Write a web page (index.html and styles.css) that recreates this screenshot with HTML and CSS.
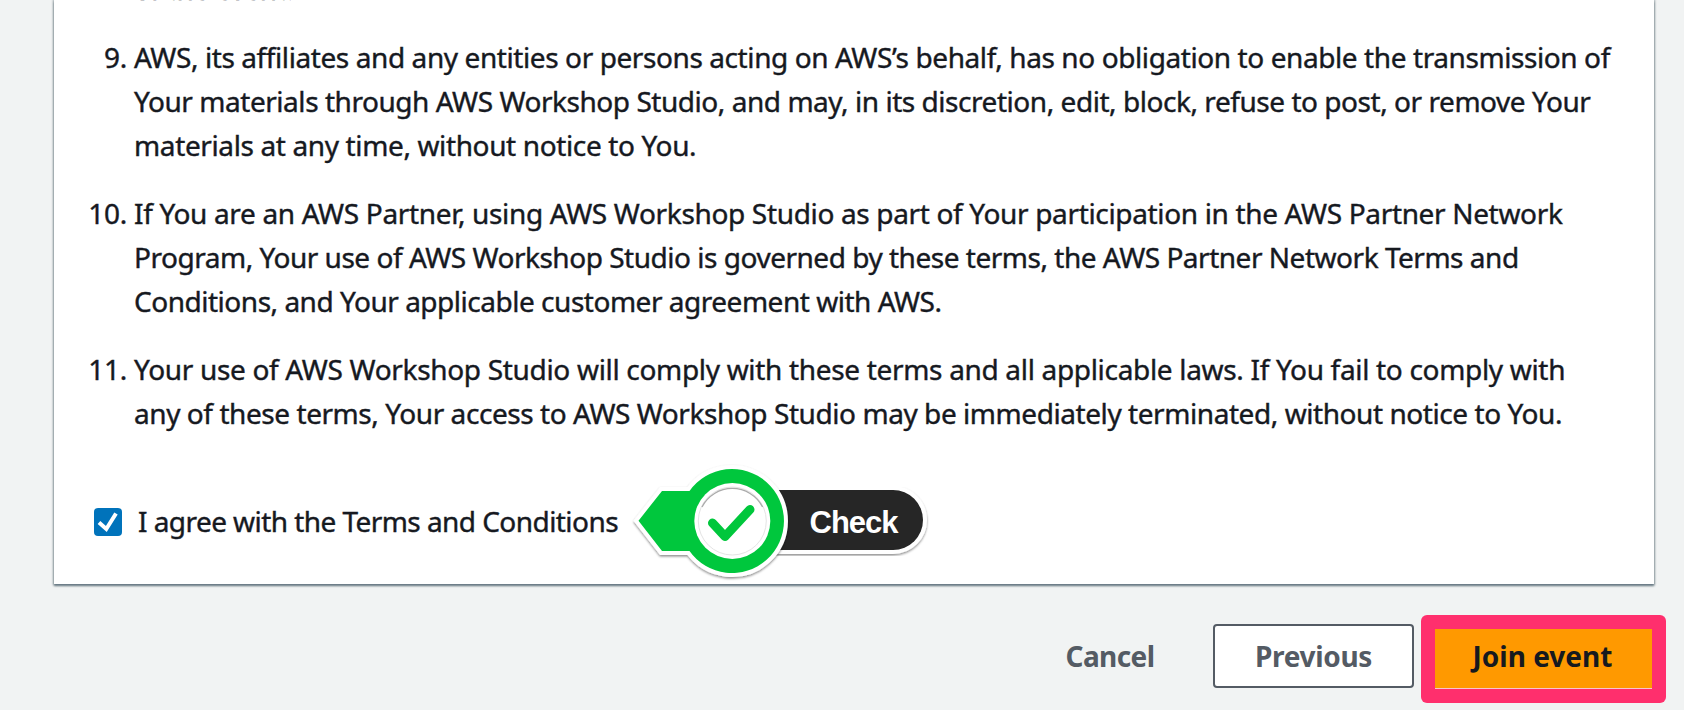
FILE: index.html
```html
<!DOCTYPE html>
<html lang="en">
<head>
<meta charset="utf-8">
<title>Join event</title>
<link rel="stylesheet" href="styles.css">
</head>
<body>
<main class="page">
  <section class="card">
    <ol class="terms" start="8">
      <li class="term"><span class="num"></span><div class="lines">
        <span class="line">of the event.</span>
      </div></li>
      <li class="term"><span class="num">9.</span><div class="lines">
        <span class="line t40">AWS, its affiliates and any entities or persons acting on AWS’s behalf, has no obligation to enable the transmission of</span>
        <span class="line t39">Your materials through AWS Workshop Studio, and may, in its discretion, edit, block, refuse to post, or remove Your</span>
        <span class="line t35">materials at any time, without notice to You.</span>
      </div></li>
      <li class="term"><span class="num">10.</span><div class="lines">
        <span class="line t34">If You are an AWS Partner, using AWS Workshop Studio as part of Your participation in the AWS Partner Network</span>
        <span class="line t48">Program, Your use of AWS Workshop Studio is governed by these terms, the AWS Partner Network Terms and</span>
        <span class="line t45">Conditions, and Your applicable customer agreement with AWS.</span>
      </div></li>
      <li class="term"><span class="num">11.</span><div class="lines">
        <span class="line t32">Your use of AWS Workshop Studio will comply with these terms and all applicable laws. If You fail to comply with</span>
        <span class="line t43">any of these terms, Your access to AWS Workshop Studio may be immediately terminated, without notice to You.</span>
      </div></li>
    </ol>
    <div class="agree">
      <svg class="checkbox" width="28" height="28" viewBox="0 0 28 28">
        <rect width="28" height="28" rx="4" fill="#0073bb"/>
        <path d="M5 14.5l7.3 6.5L22 5.5" fill="none" stroke="#fff" stroke-width="4"/>
      </svg>
      <span class="line agree-text">I agree with the Terms and Conditions</span>
      <svg class="callout" width="320" height="134" viewBox="0 0 320 134">
        <defs>
          <filter id="shadow" x="-5%" y="-5%" width="110%" height="115%">
            <feDropShadow dx="0" dy="1.5" stdDeviation="1" flood-color="#000" flood-opacity=".45"/>
          </filter>
        </defs>
        <g filter="url(#shadow)">
          <path d="M112 40H273a30 30 0 0 1 0 60H112z" fill="#252525" stroke="#fff" stroke-width="8" paint-order="stroke"/>
        </g>
        <g filter="url(#shadow)">
          <path d="M18.5 70.7L42 41H69.500A52 52 0 1 1 69.500 101H42z" fill="#00c73c" stroke="#fff" stroke-width="8" paint-order="stroke"/>
        </g>
        <circle cx="112.300" cy="71" r="38" fill="#fff"/>
        <circle cx="112.300" cy="71" r="34" fill="#fff" stroke="#e4e4e4"/>
        <path d="M82 57A34 34 0 0 1 142.600 57" fill="none" stroke="#aaa" stroke-width="1.300"/>
        <path d="M92.500 73L105 86.500L130 59.500" fill="none" stroke="#00c73c" stroke-width="9" stroke-linecap="round" stroke-linejoin="round"/>
        <text class="callout-label" x="189.500" y="83">Check</text>
      </svg>
    </div>
  </section>
  <footer class="actions">
    <button class="btn cancel">Cancel</button>
    <button class="btn previous">Previous</button>
    <div class="highlight"><button class="btn join">Join event</button></div>
  </footer>
</main>
</body>
</html>
```
FILE: styles.css
```css
* { box-sizing: border-box; }
body { margin: 0; background: #f1f3f3; color: #16191f; font: 28px/44px "Noto Sans", "Open Sans", sans-serif; }
.page { width: 1684px; height: 710px; overflow: hidden; display: flex; flex-direction: column; }
.card { flex: none; height: 584px; margin: 0 30px 0 54px; background: #fff; box-shadow: 0 2px 2px #687a84, 0 0 2px 1px rgba(0, 28, 36, .3); }
.terms { list-style: none; margin: -33px 0 0; padding: 0; display: flex; flex-direction: column; gap: 24px; }
.term { display: flex; }
.num { flex: none; width: 73px; margin-right: 7px; text-align: right; letter-spacing: -.3px; -webkit-text-stroke: .4px; }
.lines { display: flex; flex-direction: column; }
.line { white-space: nowrap; -webkit-text-stroke: .4px; letter-spacing: -.38px; }
.t32 { letter-spacing: -.32px; }
.t34 { letter-spacing: -.34px; }
.t35 { letter-spacing: -.37px; }
.t39 { letter-spacing: -.455px; }
.t40 { letter-spacing: -.41px; }
.t43 { letter-spacing: -.435px; }
.t45 { letter-spacing: -.48px; }
.t48 { letter-spacing: -.48px; }
.agree { display: flex; align-items: center; height: 134px; margin: 20px 0 0 40px; }
.checkbox { flex: none; margin-right: 16px; }
.agree-text { width: 488px; margin-bottom: 2px; letter-spacing: -.56px; }
.callout { flex: none; margin: 0 0 10px -6px; }
.callout-label { font: bold 31px "Liberation Sans", Arial, sans-serif; fill: #fff; letter-spacing: -1px; }
.actions { display: flex; justify-content: flex-end; align-items: flex-start; padding: 31px 18px 0 0; }
.btn { font: bold 28px/36px "Noto Sans", "Open Sans", sans-serif; border: 0; padding: 0; color: #545b64; background: none; height: 64px; white-space: nowrap; }
.cancel { width: 100px; margin: 9px 53px 0 0; letter-spacing: -.6px; }
.previous { width: 201px; margin: 9px 7px 0 0; border: 2px solid #545b64; border-radius: 4px; background: #fff; letter-spacing: -.3px; }
.highlight { width: 245px; height: 88px; padding: 14px; border-radius: 6px; background: #ff2f6d; }
.join { width: 217px; height: 60px; padding: 0 2px 6px 0; background: #f90; color: #16191f; border-bottom: 1px solid #f8c4cc; }
```
